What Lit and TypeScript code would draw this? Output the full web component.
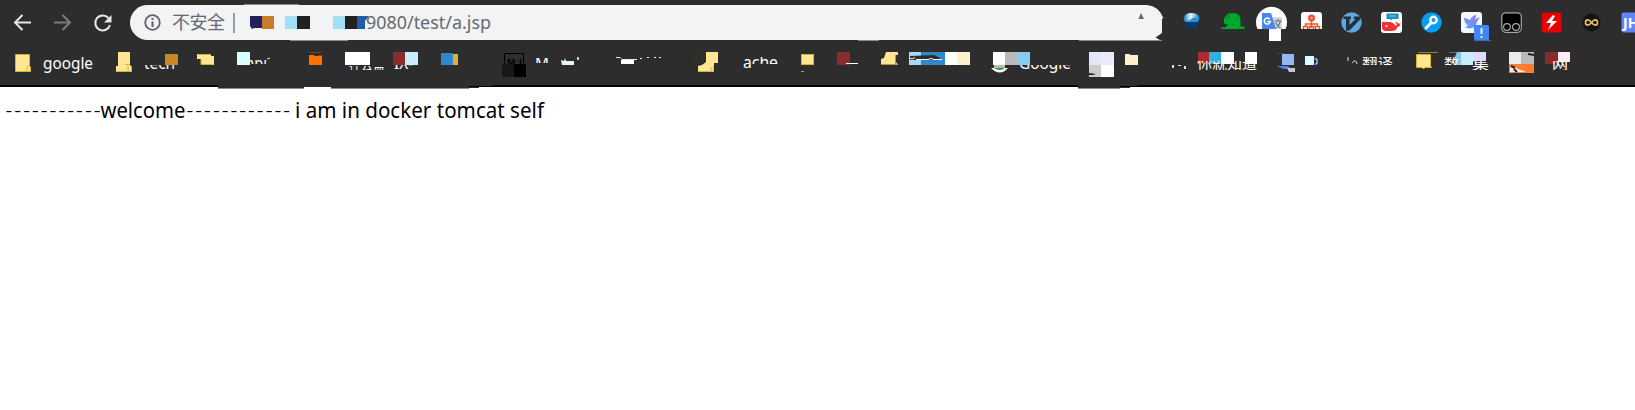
import { LitElement, html, svg, css } from "lit";
import { customElement } from "lit/decorators.js";

type Slot = { x: number; w: number; art: unknown };

const box = (x: number, y: number, w: number, h: number, fill: string) =>
  svg`<rect x=${x} y=${y} width=${w} height=${h} fill=${fill} />`;

/* A label whose visible part is limited to the rows top..bottom. */
const label = (
  x: number, base: number, width: number, text: string,
  top = 45, bottom = 85, size = 16,
) => svg`<svg x=${x - 2} y=${top} width=${width + 6} height=${bottom - top}>
  <text x="2" y=${base - top} font-size=${size} textLength=${width} lengthAdjust="spacingAndGlyphs" class="label">${text}</text>
</svg>`;

const extensions: unknown[] = [
  svg`<defs><linearGradient id="dome"><stop offset="0" stop-color="#0672bd"/><stop offset=".45" stop-color="#f2fbff"/><stop offset="1" stop-color="#0878c6"/></linearGradient></defs>
    <path d="M14 20h13v8.500H14Z" fill="#063a6c"/><path d="M12.500 18q1-5 8-5t8 5q0 3-3 4H15q-2.500-1-2.500-4Z" fill="url(#dome)"/><path d="M13 19q4 3 7 0t8 0l-2 3H15Z" fill="#2493dc"/>`,
  svg`<path d="M13 18l4-4.500 7-.5 4 2 1.500 4v7.500h4V29H10v-1.500h4l3-3-4-1Z" fill="#00a82d"/><path d="M13 18h4.500v-4.500M25 20l1 1M20 24l3 1" stroke="#067a26" stroke-width=".8" fill="none"/>`,
  svg`<path d="M6.500 29a15.500 15.500 0 1 1 28 0Z" fill="#fff"/><path d="M21 17h10v12h-7Z" fill="#d5d8dc"/><path d="M11 13h9l5 16H11Z" fill="#4a86ec"/>
    <path d="M18.700 19.200a3 3 0 1 0 .6 2.300h-3" stroke="#fff" stroke-width="1.600" fill="none"/><path d="M23.500 21h7M27 19v2M29.500 21.500q-2 4-4 6.500M24.500 22.500q2 4 5 5.500" stroke="#65727d" stroke-width="1.200" fill="none"/>${box(18, 29, 12, 12, "#fff")}`,
  svg`<path d="M10 29V15q0-3 3-3h15q3 0 3 3v14Z" fill="#fff"/><circle cx="20.500" cy="18" r="3.500" fill="#f4502b"/><circle cx="20.500" cy="18" r="1.300" fill="#f9a08b"/>
    <path d="M20.500 21v7M14.500 27v-3h12v3M12.500 29v-2.500h4V29M18.500 29v-2.500h4V29M24.500 29v-2.500h4V29" stroke="#f4502b" stroke-width="1.500" fill="none"/>`,
  svg`<circle cx="20.500" cy="22.500" r="10.200" fill="#62a8dc"/><path d="M12.500 16.500h7.500v2.500h-1.500v6l6-6H23v-2.500h6.500V19L18.500 30.500H15V19h-2.500Z" fill="#1d3345"/>`,
  svg`<rect x="10" y="12" width="21" height="21" rx="3" fill="#fff"/><path d="M15.500 13.500h12v5.500h-6l-2 2v-2h-4Z" fill="#168ec8"/><path d="M18 16h7" stroke="#86c7e4"/>
    <path d="M11 22h8.500q4 1 5 4l1.500-1.500-2-2.500 2.500 .5 1.500 1.500 1.500-1.500q0 4-3 4.500-1 4-6 4h-7q-3-1-2.500-5Z" fill="#ef3438"/><circle cx="15.500" cy="26" r="1" fill="#fff"/>`,
  svg`<circle cx="20.500" cy="22.500" r="10.200" fill="#079bf2"/><path d="M20 23l-5 5" stroke="#fff" stroke-width="3" stroke-linecap="round"/><circle cx="22.500" cy="20" r="3.200" stroke="#fff" stroke-width="2.400" fill="#079bf2"/>`,
  svg`<defs><linearGradient id="bird" x1="0" y1="1" x2="1" y2="0"><stop offset="0" stop-color="#58a2f5"/><stop offset="1" stop-color="#9a7af0"/></linearGradient></defs>
    <rect x="10" y="12" width="21" height="21" rx="3" fill="#f5f7ff"/><path d="M13 17.500l6 2.500q2-4 6-5.500 0 3-1 4.500l5-1.500-3 4q-1 7-8 7l-4-1 3-2q-4-3-4-8Z" fill="url(#bird)"/>
    <rect x="23" y="25" width="15" height="15" rx="1.500" fill="#4285f4"/><path d="M30.500 28v6M30.500 36v2" stroke="#e1edff" stroke-width="2"/><path d="M23 40.500h24" stroke="#3d69b2"/>`,
  svg`<rect x="10.800" y="12.800" width="19.500" height="19.500" rx="4" fill="#000" stroke="#a8a8a8" stroke-width="1.200"/><g fill="none" stroke="#a8a8a8" stroke-width="1.200"><circle cx="16" cy="27" r="3.400"/><circle cx="25" cy="27" r="3.400"/></g>`,
  svg`<rect x="10.500" y="12.500" width="20" height="20" rx="2.500" fill="#e60000"/><path d="M22 15l-7 8h5l-3 7 9-9h-5l3-5Z" fill="#fff"/>`,
  svg`<circle cx="20.500" cy="22.500" r="9" fill="#18130f"/><path d="M20.500 22.500c-3-4-6-3-6 0s3 4 6 0 6-3 6 0-3 4-6 0Z" stroke="#e5be67" stroke-width="1.700" fill="none"/>`,
];

const Y = "#ffe695";
const bookmarks: Slot[] = [
  { x: 0, w: 110, art: svg`<path d="M15.500 54.500h14v11l1 2v4h-15Z" fill="${Y}" stroke="#d7b435"/><path d="M27 71v-4l2-2" stroke="#d7b435" fill="none"/>${label(43, 69, 50, "google")}` },
  { x: 110, w: 80, art: svg`<path d="M118 52h12v13l2 2v5h-16v-6h2Z" fill="${Y}"/><path d="M125 64.500h5M116 71.500h15.500V67M128 71v-5" stroke="#d7b435" fill="none"/>${label(144, 69, 31, "tech", 65, 69)}${box(165, 54, 13, 11, "#c8862b")}` },
  { x: 190, w: 40, art: svg`<path d="M197 54h14v2h3v9h-13v-6h-4Z" fill="${Y}"/><path d="M198 54.500h13M201 59v5.500h12" stroke="#d7b435" fill="none"/>` },
  { x: 230, w: 70, art: svg`${box(237, 52, 13, 13, "#d9fdff")}${label(246, 69, 21, "api", 60, 64)}<path d="M267 59l3-1" stroke="#ddd"/>` },
  { x: 300, w: 40, art: svg`${box(309, 55, 13, 10, "#ff7200")}<path d="M309 52.500h12" stroke="#80410e"/><path d="M314 56q3-2 8-1" stroke="#2d2d2d"/>` },
  { x: 340, w: 50, art: svg`${box(345, 52, 25, 13, "#fff")}${label(349, 70, 36, "控云盒", 66, 70, 15)}` },
  { x: 390, w: 45, art: svg`${box(393, 52, 12, 13, "#8a2c2e")}${box(405, 52, 13, 13, "#c8efff")}${label(394, 69, 19, "IX-", 65, 69)}` },
  { x: 435, w: 60, art: svg`<path d="M441 53h12v12h-12Z" fill="#2f88ca"/><path d="M453 54h5v11h-5Z" fill="#dfb034"/>` },
  { x: 495, w: 110, art: svg`<rect x="504.500" y="53.500" width="19" height="20" fill="none" stroke="#000"/><text x="507" y="65" font-size="9" font-weight="700" textLength="15" font-family="Noto Sans">MJ</text>${box(502, 64, 12, 13, "#181818")}${box(514, 64, 12, 13, "#000")}${label(535, 69, 14, "M", 58, 63)}<path d="M561 60l3 1 1-3 1 3h8v4h-12Z" fill="#eaf7f7"/>${box(577, 57, 2, 3, "#ccc")}` },
  { x: 605, w: 80, art: svg`<path d="M616 57.500h4l2 2h15M640 58.500h2M647 57.500h2M654 57.500h2M659 57.500h2" stroke="#e8e8e8" fill="none"/>${box(621, 60, 13, 4, "#fff")}` },
  { x: 685, w: 105, art: svg`${box(694, 52, 12, 12, "#2f2f29")}<path d="M706 52h12v11h-4v9h-16v-6l4-1 4-3Z" fill="${Y}"/><path d="M698 71.500h15.500V66M711 71v-4" stroke="#d7b435" fill="none"/>${label(743, 68, 35, "ache", 57, 69)}${box(752, 64, 30, 6, "#2d2d2d")}` },
  { x: 790, w: 40, art: svg`<rect x="801.500" y="54.500" width="12" height="10" fill="${Y}" stroke="#d7b435"/>${box(801, 71, 3, 1, "#b79451")}` },
  { x: 830, w: 40, art: svg`${box(837, 52, 13, 13, "#8a2c2e")}${box(846, 63, 12, 1, "#fff")}` },
  { x: 870, w: 35, art: svg`<path d="M886 52h12v3h-2v7l2 3h-17v-6l3-1Z" fill="${Y}"/><path d="M881 64.500h16M895.500 55v9" stroke="#b99631" fill="none"/>` },
  { x: 905, w: 80, art: svg`${box(909, 52, 12, 13, "#a9d8f8")}${box(921, 52, 24, 13, "#2e88ca")}${box(945, 52, 12, 13, "#fff")}${box(957, 52, 13, 13, "#fff0cd")}<path d="M910 56l24-1 6 3 2 2h-32Z" fill="#2d2d2d"/><path d="M909 57.500l3 1.500 3-1.500M916 59.500h12l3-1 3 1h8" stroke="#fff" fill="none"/>` },
  { x: 985, w: 95, art: svg`${box(993, 52, 12, 13, "#fff")}${box(1005, 52, 12, 13, "#bababa")}${box(1017, 52, 13, 13, "#89caf4")}${box(994, 65, 11, 3, "#bababa")}<path d="M991 68h17q-8 9-17 0Z" fill="#fff"/><path d="M994 68h11q-5 4-11 0Z" fill="#23983b"/>${label(1019, 69, 52, "Google", 65, 74)}` },
  { x: 1080, w: 40, art: svg`${box(1089, 52, 12, 13, "#e6e6fa")}${box(1101, 52, 13, 13, "#ebeafb")}${box(1089, 65, 12, 12, "#ccc")}${box(1101, 65, 13, 12, "#fff")}<path d="M1089 73l7 1-3 1h-4" fill="#222"/>` },
  { x: 1120, w: 45, art: svg`<path d="M1125 54h4l2 1h7v10h-13Z" fill="#fff0cd"/>` },
  { x: 1165, w: 100, art: svg`${box(1172, 65, 2, 3, "#ddd")}${box(1178, 65, 3, 1, "#ddd")}${box(1184, 66, 2, 3, "#ddd")}${box(1198, 52, 11, 12, "#ad2b2e")}${box(1209, 52, 12, 12, "#30b1e0")}${box(1221, 52, 13, 12, "#fff")}${label(1197, 69, 60, "你就知道", 61, 70, 15)}${box(1245, 52, 12, 12, "#fff")}` },
  { x: 1265, w: 35, art: svg`<path d="M1277 53.500h8" stroke="#284779"/>${box(1282, 54, 12, 11, "#96b7f3")}<path d="M1277 66h11l3 3h-8Z" fill="#4285f4"/><path d="M1287 68h8v4h-6Z" fill="#c8c8c8"/>` },
  { x: 1300, w: 40, art: svg`${box(1305, 56, 9, 9, "#d9fdff")}<path d="M1314 59h3v5h-3" stroke="#d9fdff" fill="none"/><path d="M1314.500 59v9" stroke="#1b2e8e"/>` },
  { x: 1340, w: 65, art: svg`<path d="M1348 57v4M1352 63q4-5 5 1" stroke="#ddd" fill="none"/>${label(1362, 69, 31, "翻译", 57, 65, 15)}` },
  { x: 1405, w: 35, art: svg`<path d="M1418 52.500h20" stroke="#9b7e38"/><path d="M1416.500 54.500h14v11l1 2h-6l-2 1-2-1h-5Z" fill="${Y}" stroke="#d7b435"/>` },
  { x: 1440, w: 60, art: svg`<path d="M1449 52.500h8" stroke="#4f7288"/><path d="M1457 52h4v13h-5l-2-6Z" fill="#87c6ef"/>${label(1444, 69, 15, "数", 57, 65, 15)}${box(1461, 52, 12, 13, "#c9efff")}${box(1473, 52, 13, 9, "#dfdcff")}${label(1472, 69, 17, "集", 61, 70, 15)}` },
  { x: 1500, w: 40, art: svg`${box(1509, 52, 12, 12, "#ecebea")}${box(1521, 52, 13, 12, "#bbb")}${box(1509, 64, 25, 9, "#ff7d32")}<path d="M1510 72v-5l3-1 5 3 8 3Z" fill="#eee"/><path d="M1511 66l4 2M1514 69l3 3M1528 54l6 1" stroke="#222" stroke-width="2"/>` },
  { x: 1540, w: 95, art: svg`${box(1545, 52, 13, 12, "#872c2e")}${box(1558, 52, 12, 10, "#ffeeef")}${label(1552, 69, 16, "网", 61, 70, 16)}` },
];

@customElement("app-root")
export class AppRoot extends LitElement {
  static styles = css`
    :host { display: block; height: 410px; background: #fff; overflow: hidden; font-family: "Noto Sans", "Noto Sans CJK SC", sans-serif; color: #000; }
    svg { display: block; flex: none; }
    .toolbar { display: flex; height: 45px; background: #2d2d2d; }
    .bookmarks { display: flex; height: 44px; }
    .label { fill: #fff; font-family: "Noto Sans", "Noto Sans CJK SC", sans-serif; }
    .address { fill: #66696d; }
    .page { display: flex; padding: 6px 0 0 6px; }
  `;

  render() {
    return html`
      <header>
        <div class="toolbar">
          <svg width="125" height="45" fill="none" stroke-width="2">
            <path d="M31 22.500H15M22.500 15L15 22.500l7.500 7.500" stroke="#e8e8e8"/>
            <path d="M54 22.500h16M62.500 15l7.500 7.500-7.500 7.500" stroke="#7d7d7d"/>
            <path d="M108.500 18A7.500 7.500 0 1 0 110 25" stroke="#e8e8e8"/><path d="M111.500 15v7.500H104Z" fill="#e8e8e8"/>
          </svg>
          <svg width="1046" height="45" viewBox="125 0 1046 45">
            <path d="M147.500 5H1147q12 1 16.500 13.500h-1.500V33l-6.500 4.500 4.500 2.500H147.500a17.500 17.500 0 0 1 0-35Z" fill="#f1f3f5"/>
            <path d="M244 4.500h55M290 40.500h58M858 40.500h21M1079 40.500h83" stroke="#8c8c8c"/>
            <circle cx="152.500" cy="22.500" r="7.300" fill="none" stroke="#5f6368" stroke-width="1.800"/><path d="M152.500 18v2M152.500 21.500v5.500" stroke="#5f6368" stroke-width="2"/>
            <text class="address" x="172" y="29" font-size="18" textLength="53">不安全</text>
            ${box(233, 13, 2, 20, "#9a9c9f")}
            <path d="M250 16h12v12h-8l-2 1-2-3Z" fill="#23215e"/>${box(262, 16, 12, 13, "#c77f27")}
            ${box(285, 16, 12, 13, "#a3def4")}${box(297, 16, 13, 13, "#202124")}
            ${box(333, 16, 12, 13, "#a3def4")}${box(345, 16, 12, 13, "#202124")}<path d="M357 16h12l-4 5v8h-8Z" fill="#205da9"/>
            <text class="address" x="366" y="28.500" font-size="18" textLength="125" lengthAdjust="spacingAndGlyphs">9080/test/a.jsp</text>
            <path d="M1138.500 19l2.500-6 3 6Z" fill="#62656a"/>
          </svg>
          ${extensions.map((art) => html`<svg width="40" height="45">${art}</svg>`)}
          <svg width="24" height="45"><path d="M24 12.500H12.500q-2 0-2 2v16q0 2 2 2H24Z" fill="#6284f7"/>
            <text x="12" y="27.500" font-size="14" font-weight="700" fill="#fff" font-family="Noto Sans">JH</text></svg>
        </div>
        <div class="bookmarks">
          ${bookmarks.map(({ x, w, art }) => html`<svg width=${w} height="44" viewBox=${`${x} 45 ${w} 44`}>
            ${box(x, 45, w, 40, "#2d2d2d")}${box(x, 85, w, 2, "#000")}
            ${svg`<path d="M218 85h86v3h-86ZM304 85h27v2h-27ZM331 85h138v3h-138ZM469 85h24v1h-24ZM1078 85h42v3h-42ZM1120 85h18v1h-18Z" fill="#2d2d2d"/><path d="M469 87h10v1h-10ZM1120 87h10v1h-10Z" fill="#2d2d2d"/><path d="M218 88.500h86M331 88.500h138M1078 88.500h42" stroke="#8c8c8c"/>`}
            ${art}</svg>`)}
        </div>
      </header>
      <main class="page"><svg width="560" height="30" viewBox="6 95 560 30" font-size="21">
        <text x="5.500" y="118" font-weight="300" textLength="95">-----------</text>
        <text x="100.500" y="118" textLength="85" lengthAdjust="spacingAndGlyphs">welcome</text>
        <text x="186.500" y="118" font-weight="300" textLength="103.500">------------</text>
        <text x="295" y="118" textLength="249" lengthAdjust="spacingAndGlyphs">i am in docker tomcat self</text>
      </svg></main>`;
  }
}
